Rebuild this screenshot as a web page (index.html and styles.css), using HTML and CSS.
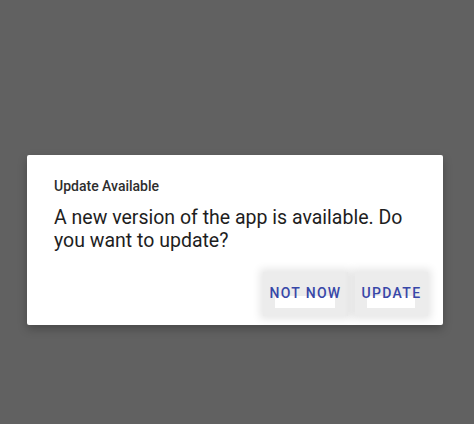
FILE: index.html
```html
<!DOCTYPE html>
<html>
<head>
<meta charset="utf-8">
<link rel="stylesheet" href="styles.css">
</head>
<body>
<div class="screen">
  <div class="dialog">
    <div class="title">Update Available</div>
    <div class="message">A new version of the app is available. Do you want to update?</div>
    <div class="actions">
      <div class="btn btn-notnow"><span class="label">NOT NOW</span></div>
      <div class="btn btn-update"><span class="label">UPDATE</span></div>
    </div>
  </div>
</div>
</body>
</html>
```
FILE: styles.css
```css
html, body {
  margin: 0;
  padding: 0;
}
body {
  width: 474px;
  height: 424px;
  background: #616161;
  font-family: Roboto, "Noto Sans", sans-serif;
  overflow: hidden;
}
.screen {
  display: flex;
  flex-direction: column;
  padding: 155px 0 0 27px;
}
.dialog {
  width: 416px;
  height: 170px;
  box-sizing: border-box;
  background: #ffffff;
  border-radius: 2px;
  padding: 23px 15px 0 27px;
  box-shadow: 0 4px 10px rgba(0,0,0,0.25);
}
.title {
  font-size: 14px;
  font-weight: 500;
  color: #2e2e2e;
  line-height: 17px;
}
.message {
  margin-top: 11px;
  font-size: 19.5px;
  line-height: 23px;
  color: #1e1e1e;
  width: 370px;
}
.actions {
  display: flex;
  justify-content: flex-end;
  gap: 7px;
  margin-top: 20px;
}
.btn {
  height: 44px;
  box-sizing: border-box;
  background: #ececec;
  box-shadow: 0 0 8px 3px rgba(0,0,0,0.10);
  display: flex;
  align-items: flex-start;
  justify-content: center;
  padding-top: 13px;
}
.btn-notnow {
  width: 85px;
}
.btn-update {
  width: 73px;
}
.label {
  font-size: 14px;
  font-weight: 500;
  letter-spacing: 1.3px;
  color: #3847a8;
  line-height: 16px;
  padding: 0 0 10px;
  background: linear-gradient(#ffffff, #ffffff) no-repeat;
  background-size: calc(100% - 11px) 12px;
  background-position: 5px 11px;
}
```
